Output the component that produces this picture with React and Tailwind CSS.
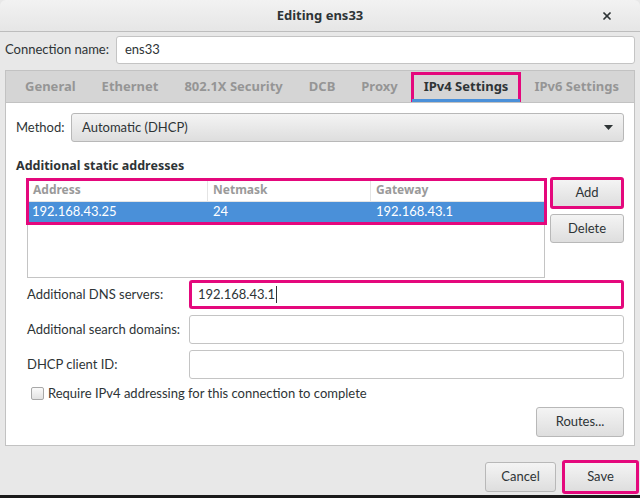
import { X } from 'lucide-react'

const FONT = "font-['Lato','Liberation_Sans',sans-serif]"
const BOLD = "font-['Noto_Sans','DejaVu_Sans',sans-serif] font-bold"

function Button({ children, pink, className = '' }) {
  return (
    <div
      className={`flex items-center justify-center rounded-[3px] bg-gradient-to-b from-[#f4f4f4] to-[#dedede] text-[13px] text-[#2e3436] whitespace-nowrap ${
        pink ? 'border-[3px] border-[#e4087c]' : 'border border-[#b8b8b8]'
      } ${className}`}
    >
      {children}
    </div>
  )
}

function Field({ label, value, pink }) {
  return (
    <div className="flex items-center h-[29px]">
      <div className="w-[162px] text-[13px] text-[#2e3436] whitespace-nowrap">{label}</div>
      <div
        className={`flex-1 h-full flex items-center px-[6px] bg-white rounded-[3px] text-[13px] text-[#2e3436] ${
          pink ? 'border-[3px] border-[#e4087c]' : 'border border-[#c4c4c4]'
        }`}
      >
        {value}
        {value && <span className="w-px h-[17px] bg-[#2e3436] ml-px" />}
      </div>
    </div>
  )
}

export default function App() {
  const tabs = ['General', 'Ethernet', '802.1X Security', 'DCB', 'Proxy', 'IPv4 Settings', 'IPv6 Settings']

  return (
    <div className={`w-[640px] h-[498px] bg-[#e8e8e8] flex flex-col overflow-hidden ${FONT}`}>
      {/* title bar */}
      <div className="h-[32px] shrink-0 relative flex items-center justify-center bg-gradient-to-b from-[#f2f2f2] to-[#e6e6e6] border-b border-[#bdbdbd] rounded-t-[6px]">
        <span className={`text-[13px] text-[#2e3436] ${BOLD}`}>Editing ens33</span>
        <X className="absolute right-[27px] top-[10px] h-[12px] w-[12px] text-[#2e3436]" strokeWidth={3.5} />
      </div>

      <div className="flex-1 flex flex-col pl-[5px] pr-[5px]">
        {/* connection name */}
        <div className="flex items-center h-[28px] mt-[4px] shrink-0">
          <div className="w-[111px] text-[13px] text-[#2e3436] whitespace-nowrap">Connection name:</div>
          <div className="flex-1 h-full flex items-center px-[8px] bg-white border border-[#c4c4c4] rounded-[3px] text-[13px] text-[#2e3436]">
            ens33
          </div>
        </div>

        {/* tab bar */}
        <div className="mt-[6px] h-[32px] shrink-0 flex items-stretch bg-[#d5d5d5] border border-[#c2c2c2] border-b-0 pl-[6px]">
          {tabs.map((t) => {
            const active = t === 'IPv4 Settings'
            return (
              <div key={t} className="relative flex items-center">
                <div
                  className={`flex items-center h-[30px] text-[13px] leading-none whitespace-nowrap ${BOLD} ${
                    active
                      ? 'border-[3px] border-[#e4087c] px-[10px] text-[#2e3436]'
                      : 'px-[13px] text-[#959595]'
                  }`}
                >
                  {t}
                </div>
                {active && <div className="absolute left-[1px] right-[1px] bottom-0 h-[3px] bg-[#4a90d9]" />}
              </div>
            )
          })}
        </div>

        {/* panel */}
        <div className="h-[344px] shrink-0 bg-white border border-[#c2c2c2] pl-[10px] pr-[10px] pt-[10px] flex flex-col">
          <div className="flex items-center h-[29px]">
            <div className="w-[55px] text-[13px] text-[#2e3436]">Method:</div>
            <Button className="flex-1 h-full !justify-between px-[10px]">
              <span>Automatic (DHCP)</span>
              <svg width="9" height="5" viewBox="0 0 9 5">
                <path d="M0 0h9L4.5 5z" fill="#2e3436" />
              </svg>
            </Button>
          </div>

          <div className={`mt-[15px] text-[12.5px] text-[#2e3436] ${BOLD}`}>Additional static addresses</div>

          <div className="mt-[3px] pl-[11px] flex gap-[5px]">
            <div className="flex-1 h-[99px] border border-[#c4c4c4] relative">
              <div className={`flex h-[22px] text-[12px] text-[#9a9a9a] border-b border-[#e4e4e4] ${BOLD}`}>
                <div className="w-[180px] px-[5px] flex items-center border-r border-[#e4e4e4]">Address</div>
                <div className="w-[163px] px-[5px] flex items-center border-r border-[#e4e4e4]">Netmask</div>
                <div className="flex-1 px-[5px] flex items-center">Gateway</div>
              </div>
              <div className="flex h-[20px] text-[13px] text-white bg-[#4a90d9]">
                <div className="w-[180px] px-[4px] flex items-center">192.168.43.25</div>
                <div className="w-[163px] px-[5px] flex items-center">24</div>
                <div className="flex-1 px-[5px] flex items-center">192.168.43.1</div>
              </div>
              <div className="absolute -left-[2px] -top-[2px] -right-[3px] h-[47px] border-[3px] border-[#e4087c]" />
            </div>
            <div className="w-[74px] flex flex-col gap-[5px] -mt-[2px]">
              <Button pink className="h-[32px]">Add</Button>
              <Button className="h-[29px]">Delete</Button>
            </div>
          </div>

          <div className="mt-[2px] pl-[11px] flex flex-col gap-[6px]">
            <Field label="Additional DNS servers:" value="192.168.43.1" pink />
            <Field label="Additional search domains:" />
            <Field label="DHCP client ID:" />
          </div>

          <div className="mt-[8px] h-[14px] pl-[15px] flex items-center gap-[4px] text-[13px] text-[#2e3436]">
            <div className="w-[13px] h-[13px] shrink-0 rounded-[2px] border border-[#a8a8a8] bg-gradient-to-b from-[#fafafa] to-[#e2e2e2]" />
            <span>Require IPv4 addressing for this connection to complete</span>
          </div>

          <div className="mt-[6px] flex justify-end">
            <Button className="w-[88px] h-[30px]">Routes...</Button>
          </div>
        </div>

        {/* footer */}
        <div className="flex-1 flex items-center justify-end gap-[6px] -mr-[4px] pt-[13px]">
          <Button className="w-[71px] h-[30px]">Cancel</Button>
          <Button pink className="w-[77px] h-[34px]">Save</Button>
        </div>
      </div>
      <div className="h-[3px] shrink-0 bg-[#1a1a1a]" />
    </div>
  )
}
